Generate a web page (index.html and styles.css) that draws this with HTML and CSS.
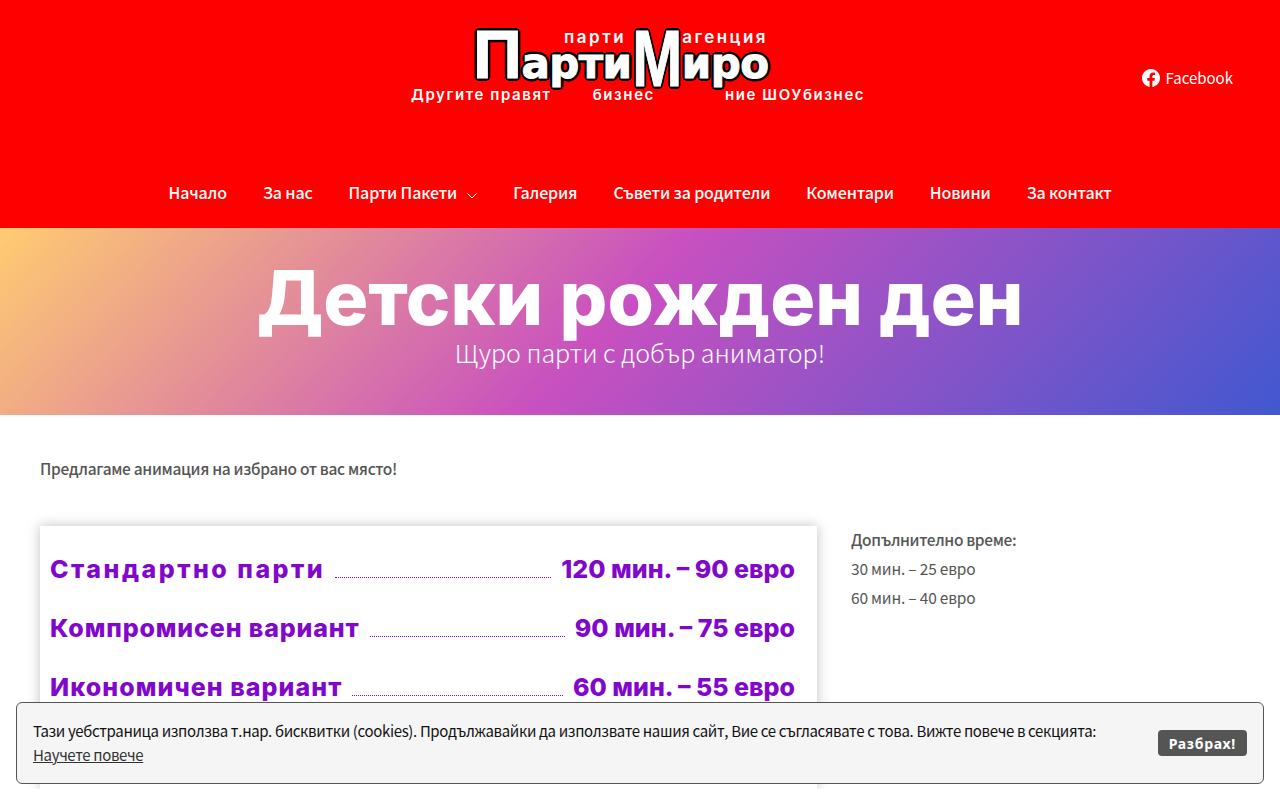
FILE: index.html
```html
<!DOCTYPE html>
<html lang="bg">
<head>
    <meta charset="UTF-8">
    <meta name="viewport" content="width=device-width, initial-scale=1.0">
    <title>ПартиМиро - Детски рожден ден</title>
    <link rel="stylesheet" href="styles.css">
</head>
<body>
    <header class="site-header">
        <div class="header-top">
            <a class="logo" href="#">
                <span class="logo-name"><span class="big">П</span>арти<span class="big tall">М</span>иро</span>
                <span class="logo-line logo-top"><span>парти</span><span>агенция</span></span>
                <span class="logo-line logo-bottom"><span>Другите правят</span><span>бизнес</span><span>ние ШОУбизнес</span></span>
            </a>
            <a class="social" href="#">
                <svg class="fb-icon" viewBox="0 0 24 24" width="18" height="18"><path fill="#fff" d="M24 12.073c0-6.627-5.373-12-12-12s-12 5.373-12 12c0 5.990 4.388 10.954 10.125 11.854v-8.385H7.078v-3.470h3.047V9.430c0-3.007 1.792-4.669 4.533-4.669 1.312 0 2.686.235 2.686.235v2.953H15.830c-1.491 0-1.956.925-1.956 1.874v2.250h3.328l-.532 3.470h-2.796v8.385C19.612 23.027 24 18.062 24 12.073z"/></svg>
                Facebook
            </a>
        </div>
        <nav class="main-nav">
            <a href="#">Начало</a>
            <a href="#">За нас</a>
            <a href="#">Парти Пакети<svg class="caret" viewBox="0 0 10 6" width="10" height="6"><path d="M.5.5 5 5 9.500.5" fill="none" stroke="#fff" stroke-width="1"/></svg></a>
            <a href="#">Галерия</a>
            <a href="#">Съвети за родители</a>
            <a href="#">Коментари</a>
            <a href="#">Новини</a>
            <a href="#">За контакт</a>
        </nav>
    </header>

    <section class="hero">
        <h1>Детски рожден ден</h1>
        <p>Щуро парти с добър аниматор!</p>
    </section>

    <main class="content">
        <p class="lead">Предлагаме анимация на избрано от вас място!</p>
        <div class="columns">
            <div class="price-card">
                <div class="price-row wide"><span class="name">Стандартно парти</span><i></i><span>120 мин. – 90 евро</span></div>
                <div class="price-row"><span class="name">Компромисен вариант</span><i></i><span>90 мин. – 75 евро</span></div>
                <div class="price-row third"><span class="name">Икономичен вариант</span><i></i><span>60 мин. – 55 евро</span></div>
            </div>
            <div class="extra">
                <p><strong>Допълнително време:</strong></p>
                <p>30 мин. – 25 евро</p>
                <p>60 мин. – 40 евро</p>
            </div>
        </div>
    </main>

    <div class="cookie-bar">
        <p>Тази уебстраница използва т.нар. бисквитки (cookies). Продължавайки да използвате нашия сайт, Вие се съгласявате с това. Вижте повече в секцията: <a href="#">Научете повече</a></p>
        <button>Разбрах!</button>
    </div>
</body>
</html>
```
FILE: styles.css
```css
/* General Styles */
body {
    font-family: 'Noto Sans CJK JP', 'Noto Sans', sans-serif;
    background: white;
    color: #555;
    margin: 0;
    padding: 0;
}

a {
    color: inherit;
    text-decoration: none;
}

/* Header */
.site-header {
    background: #ff0000;
    height: 228px;
    color: white;
}

.header-top {
    position: relative;
    height: 158px;
    display: flex;
    justify-content: center;
}

.logo {
    width: 454px;
    height: 78px;
    margin-top: 25px;
    display: grid;
}

.logo-line {
    font-family: 'Inter', sans-serif;
    font-weight: 600;
    font-size: 15px;
    line-height: 16px;
    letter-spacing: 1.600px;
    white-space: nowrap;
    display: flex;
    grid-row: 1;
    grid-column: 1;
}

.logo-top {
    gap: 56px;
    margin-left: 151px;
    font-size: 17px;
    letter-spacing: 2.500px;
    margin-top: 4px;
}

.logo-name {
    grid-row: 1;
    grid-column: 1;
    font-family: 'DejaVu Sans', sans-serif;
    font-weight: 700;
    font-size: 42px;
    line-height: 78px;
    height: 78px;
    letter-spacing: -0.500px;
    margin-left: 60px;
    white-space: nowrap;
    color: white;
    -webkit-text-stroke: 1px white;
    text-shadow: 3px 0 0 #000, -3px 0 0 #000, 0 3px 0 #000, 0 -3px 0 #000,
        2px 2px 0 #000, -2px 2px 0 #000, 2px -2px 0 #000, -2px -2px 0 #000;
}

.logo-name .big {
    font-family: 'Liberation Sans Narrow', 'Liberation Sans', sans-serif;
    font-size: 68px;
    line-height: 0;
}

.logo-name .tall {
    display: inline-block;
    font-size: 80px;
    vertical-align: -8px;
    margin: 0 -8px;
    transform: scaleX(0.75);
}

.logo-bottom {
    align-self: end;
    gap: 41px;
    margin-left: -2px;
}

.logo-bottom span:last-child {
    margin-left: 29px;
}

.social {
    position: absolute;
    right: 47px;
    top: 66px;
    display: flex;
    align-items: center;
    gap: 6px;
    font-size: 15px;
    line-height: 24px;
    font-weight: 400;
}

.main-nav {
    height: 70px;
    display: flex;
    justify-content: center;
    gap: 36px;
    font-size: 16px;
    font-weight: 500;
    letter-spacing: -0.150px;
    line-height: 70px;
    margin-top: -1px;
}

.caret {
    margin-left: 10px;
    vertical-align: 0;
}

/* Hero */
.hero {
    height: 187px;
    box-sizing: border-box;
    padding-top: 31px;
    text-align: center;
    color: white;
    background: linear-gradient(133deg, #ffcc70 0%, #c850c0 48%, #4158d0 100%);
}

.hero h1 {
    margin: 0;
    font-family: 'Inter', sans-serif;
    font-weight: 800;
    font-size: 75px;
    line-height: 77px;
}

.hero p {
    margin: 0;
    font-size: 25px;
    font-weight: 300;
    line-height: 32px;
}

/* Content */
.content {
    padding: 0 40px;
}

.lead {
    margin: 0;
    padding-top: 40px;
    font-size: 15.500px;
    letter-spacing: -0.320px;
    font-weight: 500;
    line-height: 26px;
}

.columns {
    display: flex;
    gap: 34px;
    margin-top: 45px;
}

.price-card {
    width: 777px;
    height: 263px;
    box-sizing: border-box;
    padding: 13px 22px 0 10px;
    background: white;
    box-shadow: 0 0 12px rgba(0, 0, 0, 0.25);
}

.price-row {
    display: flex;
    align-items: center;
    height: 59px;
    font-family: 'Inter', sans-serif;
    font-weight: 800;
    font-size: 25px;
    color: #8207cc;
}

.price-row .name {
    letter-spacing: 0.850px;
}

.price-row.wide .name {
    letter-spacing: 2.500px;
}

.price-row.third .name {
    letter-spacing: 1.050px;
}

.price-row i {
    flex: 1;
    margin: 18px 10px 0;
    border-bottom: 1px dotted #8207cc;
}

.extra {
    font-size: 15.500px;
    letter-spacing: -0.200px;
    margin-top: -1px;
}

.extra p {
    margin: 0;
    line-height: 29px;
}

.extra strong {
    font-weight: 500;
    letter-spacing: -0.350px;
}

/* Cookie notice */
.cookie-bar {
    position: fixed;
    left: 16px;
    right: 16px;
    bottom: 16px;
    height: 82px;
    box-sizing: border-box;
    padding: 0 16px;
    display: flex;
    align-items: center;
    justify-content: space-between;
    gap: 40px;
    background: #f5f5f5;
    border: 1px solid #555;
    border-radius: 6px;
    color: #111;
}

.cookie-bar p {
    margin: 0;
    font-size: 15px;
    letter-spacing: -0.350px;
    line-height: 24px;
    max-width: 1080px;
}

.cookie-bar a {
    text-decoration: underline;
    color: #333;
}

.cookie-bar button {
    flex: none;
    height: 26px;
    padding: 0 11px;
    border: none;
    border-radius: 4px;
    background: #555;
    color: white;
    font-family: 'Noto Sans', sans-serif;
    font-size: 14px;
    font-weight: 700;
    letter-spacing: 0.700px;
}
```
